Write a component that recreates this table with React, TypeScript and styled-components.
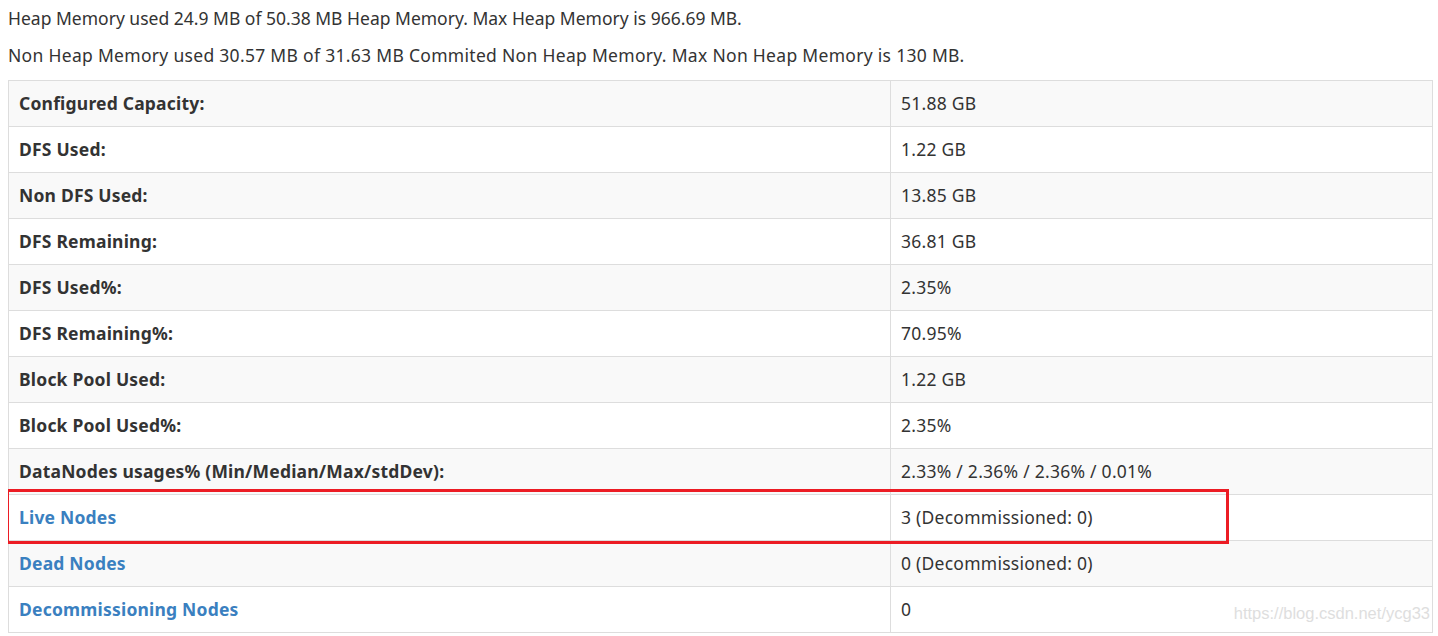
import React from "react";
import styled, { createGlobalStyle } from "styled-components";

const Global = createGlobalStyle`
  html { overflow: hidden; }
  html, body { padding: 0; background: #fff; }
  body {
    margin: 6px 0 0 8px;
    font-family: "Noto Sans", "Open Sans", sans-serif;
    font-size: 17.5px;
    line-height: 25px;
    color: #333;
  }
`;

const Page = styled.div`
  position: relative;
  width: 1430px;
`;

const Para = styled.p<{ $spacing?: number }>`
  margin: 0 0 12px;
  letter-spacing: ${(p) => p.$spacing ?? 0}px;
`;

const Table = styled.table`
  width: 1425px;
  border-collapse: collapse;
  border-spacing: 0;
  border: 1px solid #ddd;
  margin-top: 3px;
`;

const Row = styled.tr<{ $striped: boolean }>`
  background: ${(p) => (p.$striped ? "#f9f9f9" : "#fff")};
`;

const Th = styled.th`
  width: 861px;
  text-align: left;
  font-weight: 700;
  padding: 10px;
  border: 1px solid #ddd;
  height: 25px;
  vertical-align: top;
  letter-spacing: 0.2px;
`;

const Td = styled.td`
  padding: 10px;
  border: 1px solid #ddd;
  vertical-align: top;
  letter-spacing: 0.25px;
`;

const Link = styled.a`
  color: #3a80c0;
  text-decoration: none;
`;

const Highlight = styled.div`
  position: absolute;
  left: -2px;
  top: 483px;
  width: 1217px;
  height: 49px;
  border: 3px solid #ec1c24;
  pointer-events: none;
`;

const Watermark = styled.div`
  position: absolute;
  right: 8px;
  top: 597px;
  font-family: "Liberation Sans", Arial, sans-serif;
  font-size: 16.5px;
  line-height: 20px;
  color: #dedede;
  text-shadow: 0 0 1px #fff;
  pointer-events: none;
`;

const rows: { label: string; value: string; link?: boolean }[] = [
  { label: "Configured Capacity:", value: "51.88 GB" },
  { label: "DFS Used:", value: "1.22 GB" },
  { label: "Non DFS Used:", value: "13.85 GB" },
  { label: "DFS Remaining:", value: "36.81 GB" },
  { label: "DFS Used%:", value: "2.35%" },
  { label: "DFS Remaining%:", value: "70.95%" },
  { label: "Block Pool Used:", value: "1.22 GB" },
  { label: "Block Pool Used%:", value: "2.35%" },
  { label: "DataNodes usages% (Min/Median/Max/stdDev):", value: "2.33% / 2.36% / 2.36% / 0.01%" },
  { label: "Live Nodes", value: "3 (Decommissioned: 0)", link: true },
  { label: "Dead Nodes", value: "0 (Decommissioned: 0)", link: true },
  { label: "Decommissioning Nodes", value: "0", link: true },
];

export default function App() {
  return (
    <Page>
      <Global />
      <Para>Heap Memory used 24.9 MB of 50.38 MB Heap Memory. Max Heap Memory is 966.69 MB.</Para>
      <Para $spacing={0.3}>
        Non Heap Memory used 30.57 MB of 31.63 MB Commited Non Heap Memory. Max Non Heap Memory is 130 MB.
      </Para>
      <Table>
        <tbody>
          {rows.map((r, i) => (
            <Row key={r.label} $striped={i % 2 === 0}>
              <Th>{r.link ? <Link href="#">{r.label}</Link> : r.label}</Th>
              <Td>{r.value}</Td>
            </Row>
          ))}
        </tbody>
      </Table>
      <Highlight />
      <Watermark>https://blog.csdn.net/ycg33</Watermark>
    </Page>
  );
}
